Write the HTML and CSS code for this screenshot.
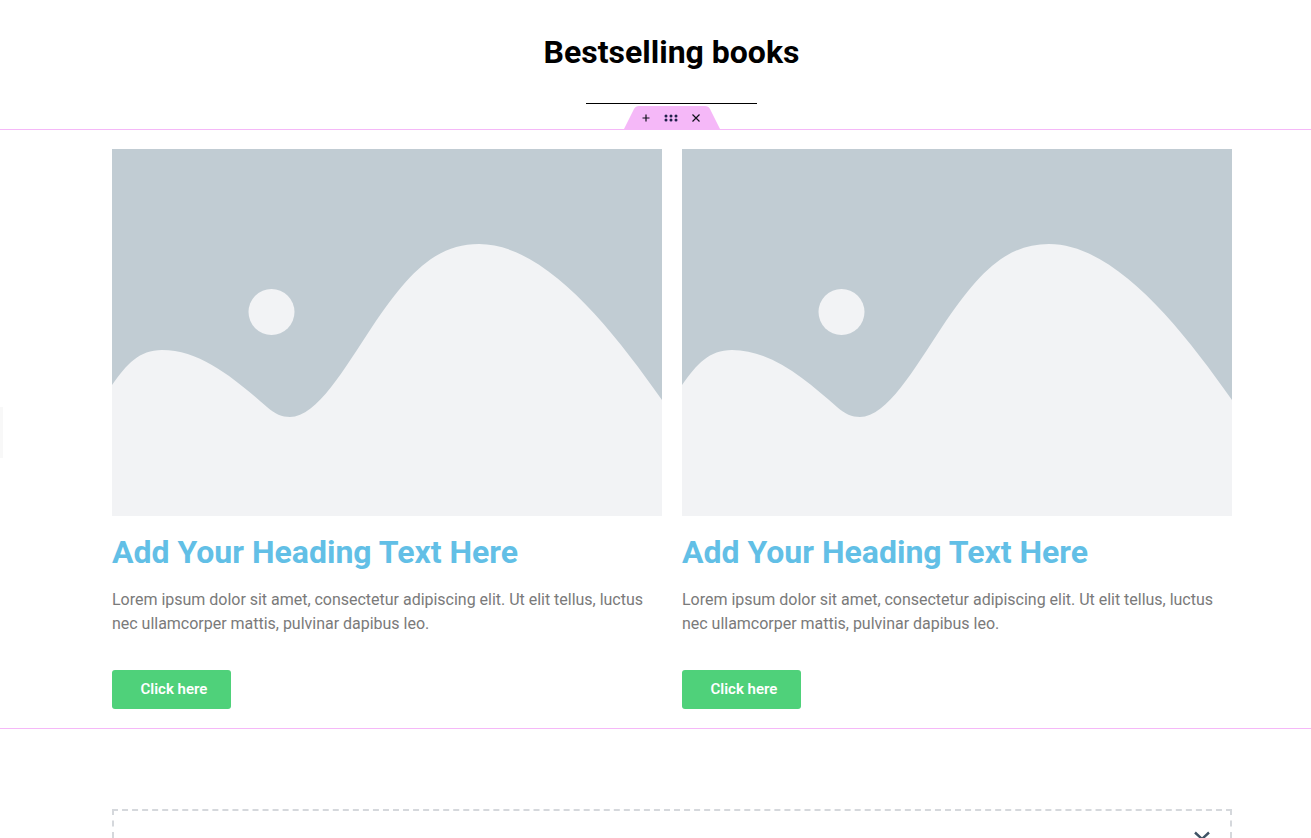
FILE: index.html
```html
<!DOCTYPE html>
<html lang="en">
<head>
<meta charset="utf-8">
<title>Bestselling books</title>
<link rel="stylesheet" href="styles.css">
</head>
<body>
<div class="edge-shadow"></div>
<header class="title-section">
  <h1 class="title">Bestselling books</h1>
  <div class="divider"></div>
  <div class="handle">
    <svg class="handle-bg" width="96" height="23" viewBox="0 0 96 23"><path d="M0 23L10 3Q11.500 0 15 0H81Q84.500 0 86 3L96 23Z"/></svg>
    <svg class="handle-icon" width="10" height="10" viewBox="0 0 10 10"><path d="M5 1.500V8.500M1.500 5H8.500"/></svg>
    <svg class="handle-icon" width="14" height="8" viewBox="0 0 14 8"><g class="dots"><circle cx="2" cy="2" r="1.500"/><circle cx="7" cy="2" r="1.500"/><circle cx="12" cy="2" r="1.500"/><circle cx="2" cy="6" r="1.500"/><circle cx="7" cy="6" r="1.500"/><circle cx="12" cy="6" r="1.500"/></g></svg>
    <svg class="handle-icon" width="10" height="10" viewBox="0 0 10 10"><path d="M1.500 1.500L8.500 8.500M8.500 1.500L1.500 8.500"/></svg>
  </div>
</header>
<section class="cards">
  <article class="card">
    <svg class="placeholder" viewBox="0 0 550 367" width="550" height="367"><rect width="550" height="367" fill="#c1ccd3"/><circle cx="159.500" cy="163" r="23" fill="#f2f3f5"/><path fill="#f2f3f5" d="M0 236C15 215 27 201 50 201C90 201 125 232 155 258C163 265 170 268 178 268C205 268 232 220 260 178C296 124 324 95 367 95C432 95 498 177 550 251V367H0Z"/></svg>
    <h2 class="card-title">Add Your Heading Text Here</h2>
    <p class="card-text">Lorem ipsum dolor sit amet, consectetur adipiscing elit. Ut elit tellus, luctus nec ullamcorper mattis, pulvinar dapibus leo.</p>
    <a class="card-btn" href="#">Click here</a>
  </article>
  <article class="card">
    <svg class="placeholder" viewBox="0 0 550 367" width="550" height="367"><rect width="550" height="367" fill="#c1ccd3"/><circle cx="159.500" cy="163" r="23" fill="#f2f3f5"/><path fill="#f2f3f5" d="M0 236C15 215 27 201 50 201C90 201 125 232 155 258C163 265 170 268 178 268C205 268 232 220 260 178C296 124 324 95 367 95C432 95 498 177 550 251V367H0Z"/></svg>
    <h2 class="card-title">Add Your Heading Text Here</h2>
    <p class="card-text">Lorem ipsum dolor sit amet, consectetur adipiscing elit. Ut elit tellus, luctus nec ullamcorper mattis, pulvinar dapibus leo.</p>
    <a class="card-btn" href="#">Click here</a>
  </article>
</section>
<section class="empty">
  <div class="dropzone">
    <svg class="chevron" width="18" height="10" viewBox="0 0 18 10"><path d="M2 1.500L9 8L16 1.500"/></svg>
  </div>
</section>
</body>
</html>
```
FILE: styles.css
```css
* { box-sizing: border-box; }
html, body { margin: 0; padding: 0; height: 838px; overflow: hidden; background: #fff; }
body { font-family: Roboto, "Liberation Sans", sans-serif; position: relative; }

.edge-shadow {
  position: absolute; left: 0; top: 407px; width: 3px; height: 51px;
  background: #f8f8f8;
}

.title-section {
  position: relative;
  height: 130px;
  padding-top: 33px;
  border-bottom: 1px solid #f5b8f8;
}
.title {
  margin: 0;
  padding-left: 32px;
  font-size: 32px;
  line-height: 38px;
  font-weight: 700;
  color: #000;
  text-align: center;
}
.divider {
  width: 171px;
  height: 1px;
  margin: 32px 0 0 586px;
  background: #000;
}

.handle {
  position: absolute;
  left: 624px; bottom: 0;
  width: 96px; height: 23px;
  display: flex;
  align-items: center;
  justify-content: center;
  gap: 13px;
  padding: 0 2px 0 0;
}
.handle-bg { position: absolute; left: 0; top: 0; fill: #f5b8f8; }
.handle-icon { position: relative; }
.handle-icon path { stroke: #10101a; stroke-width: 1.200; fill: none; }
.dots { fill: #20204a; }

.cards {
  height: 599px;
  padding: 19px 79px 0 112px;
  display: flex;
  gap: 20px;
  border-bottom: 1px solid #f5b8f8;
}
.card { width: 550px; display: flex; flex-direction: column; align-items: flex-start; }
.placeholder { display: block; }
.card-title {
  margin: 17px 0 0;
  font-size: 32px;
  line-height: 38px;
  font-weight: 700;
  color: #62bfe6;
}
.card-text {
  margin: 17px 0 0;
  font-size: 16px;
  line-height: 24px;
  letter-spacing: -0.015px;
  color: #7a7a7a;
}
.card-btn {
  margin-top: 34px;
  width: 119px;
  height: 39px;
  padding-left: 28.500px;
  border-radius: 3px;
  background: #4fd17a;
  color: #fff;
  font-size: 15px;
  font-weight: 600;
  line-height: 38px;
  text-decoration: none;
}

.empty { padding: 80px 79px 0 112px; }
.dropzone {
  position: relative;
  height: 29px;
  overflow: hidden;
  border: 2px dashed #d5d8dc;
  border-bottom: 0;
}
.chevron {
  position: absolute; right: 19.500px; top: 19.500px;
}
.chevron path { fill: none; stroke: #3f5365; stroke-width: 2.400; }
```
